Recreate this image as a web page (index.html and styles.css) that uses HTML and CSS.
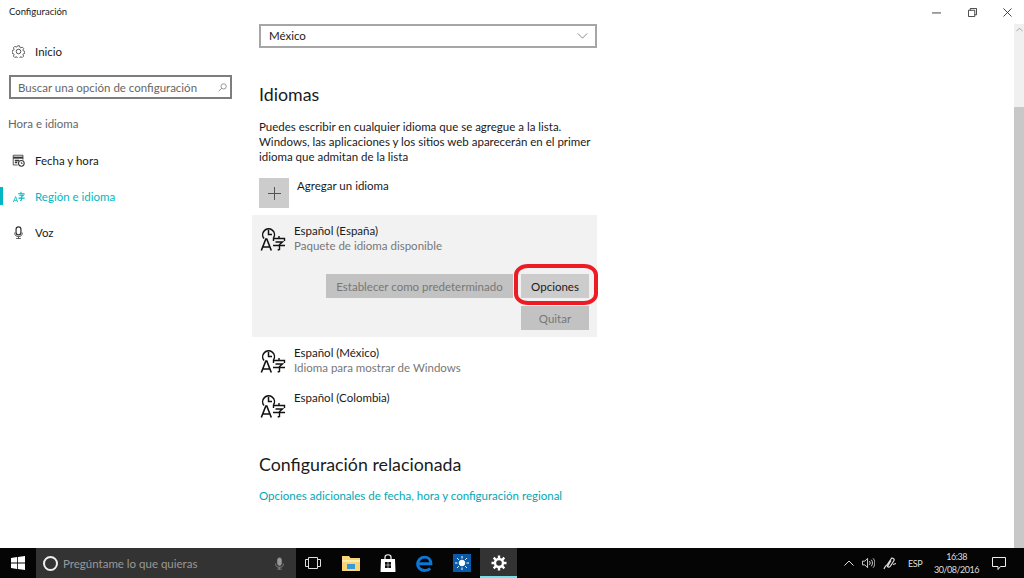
FILE: index.html
```html
<!DOCTYPE html>
<html lang="es">
<head>
    <meta charset="UTF-8">
    <title>Configuración</title>
    <link rel="stylesheet" href="styles.css">
</head>
<body>
    <div class="window">
        <!--sidebar-->
        <aside class="side">
            <div class="apptitle">Configuración</div>
            <a class="navitem home" href="#">
                <svg class="navico" viewBox="0 0 16 16" fill="none" stroke="#333" stroke-width="1"><path d="M6.600.8h2.800l.4 2 1.300.6 1.800-1 1.900 2-1 1.700.5 1.300 1.900.5v2.800l-1.900.5-.5 1.300 1 1.700-1.900 1.900-1.800-1-1.300.6-.4 1.700H6.600l-.4-1.700-1.300-.6-1.800 1-1.900-1.900 1-1.700-.5-1.300-1.900-.5V6.900l1.900-.5.5-1.300-1-1.700 1.900-2 1.800 1 1.300-.6z" transform="translate(.5 .3) scale(.94)"/><circle cx="8" cy="8" r="2.800"/></svg>
                <span>Inicio</span>
            </a>
            <div class="search">
                <span>Buscar una opción de configuración</span>
                <svg class="searchico" viewBox="0 0 12 12" fill="none" stroke="#777"><circle cx="7.500" cy="4.500" r="3.500"/><path d="M5 7 1 11"/></svg>
            </div>
            <div class="group">Hora e idioma</div>
            <a class="navitem" href="#">
                <svg class="navico" viewBox="0 0 16 16" fill="none" stroke="#333"><path d="M7 13.500H1.500V1.500h12V7"/><path d="M1.500 4.500h12" stroke-width="2.500"/><path d="M3.500 8h5M3.500 10.500h3" stroke-width="1.800"/><circle cx="11.500" cy="11.500" r="3.500" stroke-width="1.300"/><path d="M11.500 9.800v1.900h1.500"/></svg>
                <span>Fecha y hora</span>
            </a>
            <a class="navitem active" href="#">
                <svg class="navico" viewBox="0 0 16 16" fill="none" stroke="#00b7c3"><path d="M1.500 15 4.500 8 7 15M2.600 12.800h3.500"/><path d="M7.500 4.500h8M11 2v2.500M9 6.500h5l-2.500 2v4l-1.500.5M8 10h7.500" stroke-width="1.300"/></svg>
                <span>Región e idioma</span>
            </a>
            <a class="navitem" href="#">
                <svg class="navico" viewBox="0 0 16 16" fill="none" stroke="#333"><rect x="5" y="1" width="6" height="10" rx="3" stroke-width="1.500"/><path d="M3.500 8v1.500c0 2.200 2 3.500 4.500 3.500s4.500-1.300 4.500-3.500V8M8 13v2.500M5 15.500h6"/></svg>
                <span>Voz</span>
            </a>
        </aside>

        <!--content-->
        <main class="content">
            <div class="select">
                <span>México</span>
                <svg class="chev" viewBox="0 0 12 7" fill="none" stroke="#777"><path d="M.5.500 6 6l5.500-5.500"/></svg>
            </div>

            <h2 class="tit">Idiomas</h2>
            <p class="desc">Puedes escribir en cualquier idioma que se agregue a la lista.<br>Windows, las aplicaciones y los sitios web aparecerán en el primer<br>idioma que admitan de la lista</p>

            <div class="addlang">
                <div class="plus">
                    <svg viewBox="0 0 13 13" width="13" height="13" stroke="#555"><path d="M6.500 0v13M0 6.500h13"/></svg>
                </div>
                <span>Agregar un idioma</span>
            </div>

            <section class="lang open">
                <div class="langhead">
                    <svg class="langico"><use href="#lang"/></svg>
                    <div>
                        <div class="langname">Español (España)</div>
                        <div class="langsub">Paquete de idioma disponible</div>
                    </div>
                </div>
                <div class="btnrow">
                    <button class="btn off wide">Establecer como predeterminado</button>
                    <div class="ringwrap">
                        <button class="btn opt">Opciones</button>
                        <div class="ring"></div>
                    </div>
                </div>
                <div class="btnrow second">
                    <button class="btn off opt">Quitar</button>
                </div>
            </section>

            <section class="lang">
                <div class="langhead">
                    <svg class="langico"><use href="#lang"/></svg>
                    <div>
                        <div class="langname">Español (México)</div>
                        <div class="langsub">Idioma para mostrar de Windows</div>
                    </div>
                </div>
            </section>
            <section class="lang">
                <div class="langhead">
                    <svg class="langico"><use href="#lang"/></svg>
                    <div>
                        <div class="langname">Español (Colombia)</div>
                    </div>
                </div>
            </section>

            <h2 class="tit rel">Configuración relacionada</h2>
            <a class="link" href="#">Opciones adicionales de fecha, hora y configuración regional</a>
        </main>

        <!--title buttons + scrollbar-->
        <div class="rightcol">
            <div class="winbtns">
                <svg viewBox="0 0 10 10" fill="none" stroke="#333"><path d="M0 5.500h10"/></svg>
                <svg viewBox="0 0 10 10" fill="none" stroke="#333"><path d="M.5 2.500h7v7h-7zM2.500 2.500v-2h7v7h-2"/></svg>
                <svg viewBox="0 0 10 10" fill="none" stroke="#333"><path d="m.5.500 9 9M9.500.500l-9 9"/></svg>
            </div>
            <div class="scroll">
                <svg class="scrollup" viewBox="0 0 8 5" fill="none" stroke="#999"><path d="M.5 4.500 4 1l3.500 3.500"/></svg>
                <div class="thumb"></div>
            </div>
        </div>
    </div>

    <!--taskbar-->
    <footer class="taskbar">
        <div class="tbtn start">
            <svg viewBox="0 0 14 14" width="14" height="14" fill="#fff"><path d="M0 2 6 1.100V6.600H0zM6.800 1 14 0v6.600H6.800zM0 7.400h6v5.500L0 12zM6.800 7.400H14V14l-7.200-1z"/></svg>
        </div>
        <div class="cortana">
            <span class="ringo"></span>
            <span class="ask">Pregúntame lo que quieras</span>
            <svg class="mic" viewBox="0 0 12 16" fill="none" stroke="#999"><rect x="3.500" y=".5" width="5" height="10" rx="2.500" fill="#999"/><path d="M1 8v1.500C1 12 3 13 6 13s5-1 5-3.500V8M6 13v2.500M3 15.500h6"/></svg>
        </div>
        <div class="tbtn view">
            <svg viewBox="0 0 16 12" width="16" height="12" fill="none" stroke="#ddd"><path d="M3.500.5h9v11h-9zM.5 2.500h3v7h-3zM12.500 2.500h3v7h-3z"/></svg>
        </div>
        <div class="tbtn app">
            <svg viewBox="0 0 18 16" width="18" height="16"><path d="M0 1h7l1.500 2H18v13H0z" fill="#f6d675"/><path d="M0 5h18v2H0z" fill="#fbeab0"/><path d="M5 9h8v5H5z" fill="#3a9ad9"/></svg>
        </div>
        <div class="tbtn app">
            <svg viewBox="0 0 16 18" width="16" height="18" fill="#fff"><path d="M1 5h14l.5 13H.5z"/><path d="M5 5V3c0-3 6-3 6 0v2" fill="none" stroke="#fff" stroke-width="1.200"/><path d="M5 8h2.700v2.700H5zM8.300 8H11v2.700H8.300zM5 11.300h2.700V14H5zM8.300 11.300H11V14H8.300z" fill="#111"/></svg>
        </div>
        <div class="tbtn app">
            <svg viewBox="0 0 16 16" width="17" height="17" fill="none" stroke="#0a78d7" stroke-width="2.800"><path d="M2 8.300h12C14 4.500 11.800 2 8 2 4.500 2 1.500 5 1.500 8.500S4.500 14.500 8 14.500c2.300 0 4-.6 5.500-1.700"/></svg>
        </div>
        <div class="tbtn app">
            <div class="bright">
                <svg viewBox="0 0 14 14" width="14" height="14" stroke="#fff" fill="#fff"><circle cx="7" cy="7" r="2.800"/><path d="M7 0v2.500M7 11.500V14M0 7h2.500M11.500 7H14M2 2l1.800 1.800M10.200 10.200 12 12M12 2l-1.800 1.800M3.800 10.200 2 12"/></svg>
            </div>
        </div>
        <div class="tbtn app current">
            <svg viewBox="0 0 16 16" width="16" height="16" fill="none" stroke="#fff" stroke-width="2.400"><circle cx="8" cy="8" r="4"/><path d="M8 .5v3M8 12.500v3M.5 8h3M12.500 8h3M2.700 2.700l2.100 2.100M11.200 11.200l2.100 2.100M13.300 2.700l-2.100 2.100M4.800 11.200l-2.100 2.100"/></svg>
        </div>

        <div class="tray">
            <svg class="trayico" viewBox="0 0 10 6" width="10" height="6" fill="none" stroke="#ddd"><path d="M.5 5.500 5 1l4.500 4.500"/></svg>
            <svg class="trayico" viewBox="0 0 14 12" width="13" height="12" fill="none" stroke="#ddd"><path d="M.5 4H3l3-3v10L3 8H.5zM8 4c1 1 1 3 0 4M10 2.500c1.700 2 1.700 5 0 7M12 1c2.500 3 2.500 7 0 10"/></svg>
            <svg class="trayico" viewBox="0 0 14 14" width="14" height="14" fill="none" stroke="#ddd" stroke-width="1.200"><path d="M1 13c1-2 1-3 3-4l4-6c1-2 4 0 3 1.500L7.500 10c-1 1.500-2.500 1.500-3 .5L8 4.500M10 8.500l3-1"/></svg>
            <span class="lng">ESP</span>
            <div class="clock"><div>16:38</div><div>30/08/2016</div></div>
            <svg class="notif" viewBox="0 0 14 13" width="14" height="13" fill="none" stroke="#eee"><path d="M.5.5h13v9H8.500L6 12.500V9.500H.5z"/></svg>
        </div>
    </footer>

    <svg class="defs">
        <symbol id="lang" viewBox="0 0 26 24" fill="none" stroke="#111">
            <path d="M4 11.500a5.900 5.900 0 1 1 9.500-.5" stroke-width="1.500"/>
            <path d="M8.500 2.800v4.700h3.500" stroke-width="1.500"/>
            <path d="M1.300 23.500 5.800 12h1l4.500 11.500M2.800 20h7" stroke-width="1.600"/>
            <path d="M19 9v2.500M13.500 14v-2.500h11V14M15.500 15h7l-3 2.500v5l-1.800.5M13 18.500h12" stroke-width="1.400"/>
        </symbol>
    </svg>
</body>
</html>
```

FILE: styles.css
```css
html,
body {
    margin: 0;
    padding: 0;
}

body {
    width: 1024px;
    height: 578px;
    overflow: hidden;
    background-color: #fff;
    color: #1a1a1a;
    font-family: Lato, "Open Sans", sans-serif;
    font-size: 11.500px;
    display: flex;
    flex-direction: column;
}

a {
    text-decoration: none;
    color: inherit;
}

.defs {
    display: none;
}

/*window*/
.window {
    height: 548px;
    display: flex;
}

/*sidebar*/
.side {
    width: 251px;
    flex: none;
}

.apptitle {
    font-size: 9.500px;
    padding: 6px 0 0 9px;
    height: 33px;
    box-sizing: border-box;
}

.navitem {
    display: flex;
    align-items: center;
    height: 36px;
    padding-left: 12px;
    gap: 10px;
}

.navitem.home {
    margin-bottom: 6px;
}

.navico {
    width: 13px;
    height: 13px;
    flex: none;
}

/*active item: short bar, not as tall as the row*/
.navitem.active {
    color: #00b7c3;
    background: linear-gradient(#00b7c3, #00b7c3) 0 center / 3px 18px no-repeat;
}

.search {
    margin-left: 9px;
    width: 223px;
    height: 24px;
    box-sizing: border-box;
    border: 2px solid #7d7d7d;
    display: flex;
    align-items: center;
    justify-content: space-between;
    padding: 0 0 0 7px;
    color: #666;
}

.searchico {
    width: 9px;
    height: 9px;
    margin-right: 3px;
}

.group {
    color: #666;
    padding: 18px 0 0 8px;
    height: 43px;
    box-sizing: border-box;
}

/*content*/
.content {
    flex: 1;
    padding-top: 24px;
}

.select {
    width: 338px;
    height: 24px;
    margin-left: 8px;
    box-sizing: border-box;
    border: 2px solid #a6a6a6;
    display: flex;
    align-items: center;
    justify-content: space-between;
    padding: 0 7px 1px 8px;
}

.chev {
    width: 11px;
    height: 6px;
}

.tit {
    margin: 0;
    font-weight: 400;
    font-size: 17.800px;
    line-height: 24px;
    margin-left: 8px;
}

.select + .tit {
    margin-top: 34px;
}

.desc {
    margin: 13px 0 0 8px;
    line-height: 15px;
}

.addlang {
    display: flex;
    margin: 14px 0 0 8px;
    gap: 8px;
}

.addlang span {
    line-height: 16px;
}

.plus {
    width: 30px;
    height: 30px;
    background-color: #cccccc;
    display: flex;
    align-items: center;
    justify-content: center;
}

.lang {
    width: 345px;
    margin-left: 1px;
    padding: 8px 0 0 0;
    height: 45px;
    box-sizing: border-box;
}

.lang.open {
    height: 122px;
    margin-top: 7px;
    background-color: #f2f2f2;
}

.langhead {
    display: flex;
    padding-left: 8px;
    gap: 8px;
    line-height: 15px;
}

.langico {
    width: 26px;
    height: 24px;
    flex: none;
    margin-top: 4px;
}

.langsub {
    color: #777;
}

.btnrow {
    display: flex;
    justify-content: flex-end;
    gap: 8px;
    padding-right: 8px;
    margin-top: 21px;
}

.btnrow.second {
    margin-top: 8px;
}

.btn {
    height: 24px;
    border: 0;
    padding: 0;
    background-color: #cccccc;
    color: #1a1a1a;
    font-family: inherit;
    font-size: 11.500px;
    display: block;
}

.btn.off {
    color: #777;
    background-color: #c2c2c2;
}

.btn.wide {
    width: 187px;
}

.btn.opt {
    width: 68px;
}

.ringwrap {
    position: relative;
}

.ring {
    position: absolute;
    left: -7px;
    right: -9px;
    top: -10px;
    bottom: -7px;
    border: 4px solid #ed1c24;
    border-radius: 14px / 11px;
}

.tit.rel {
    margin-top: 25px;
}

.link {
    display: block;
    margin: 13px 0 0 8px;
    color: #00a8b5;
}

/*right*/
.rightcol {
    width: 10px;
    flex: none;
    position: relative;
}

.winbtns {
    position: absolute;
    right: 0;
    top: 8px;
    width: 104px;
    display: flex;
    justify-content: space-between;
    padding: 0 12px;
    box-sizing: border-box;
}

.winbtns svg {
    width: 9px;
    height: 9px;
}

.scroll {
    margin-top: 24px;
    height: 524px;
    background-color: #f0f0f0;
    display: flex;
    flex-direction: column;
    align-items: center;
    justify-content: space-between;
}

.scrollup {
    width: 7px;
    height: 5px;
    margin-top: 3px;
}

.thumb {
    width: 100%;
    height: 441px;
    background-color: #c8c8c8;
}

/*taskbar*/
.taskbar {
    height: 30px;
    background-color: #050505;
    display: flex;
    align-items: stretch;
    color: #ddd;
}

.tbtn {
    display: flex;
    align-items: center;
    justify-content: center;
}

.start {
    width: 36px;
}

.cortana {
    width: 260px;
    background-color: #333;
    display: flex;
    align-items: center;
    padding: 0 12px 0 7px;
    box-sizing: border-box;
}

.ringo {
    width: 11px;
    height: 11px;
    border: 2.500px solid #eee;
    border-radius: 50%;
}

.ask {
    margin-left: 5px;
    flex: 1;
    color: #999;
}

.mic {
    width: 9px;
    height: 13px;
}

.view {
    width: 36px;
    padding-right: 2px;
    box-sizing: border-box;
}

.app {
    width: 37px;
}

.bright {
    width: 18px;
    height: 18px;
    background-color: #0a5aa8;
    display: flex;
    align-items: center;
    justify-content: center;
}

.current {
    background-color: #333;
    box-shadow: inset 0 -2px 0 #76e0e8;
}

.tray {
    margin-left: auto;
    display: flex;
    align-items: center;
    font-size: 9px;
    letter-spacing: -.5px;
}

.trayico {
    margin-left: 8px;
}

.lng {
    margin-left: 11px;
}

.clock {
    margin-left: 12px;
    text-align: center;
    line-height: 13px;
}

.notif {
    margin: 0 18px 0 13px;
}
```
